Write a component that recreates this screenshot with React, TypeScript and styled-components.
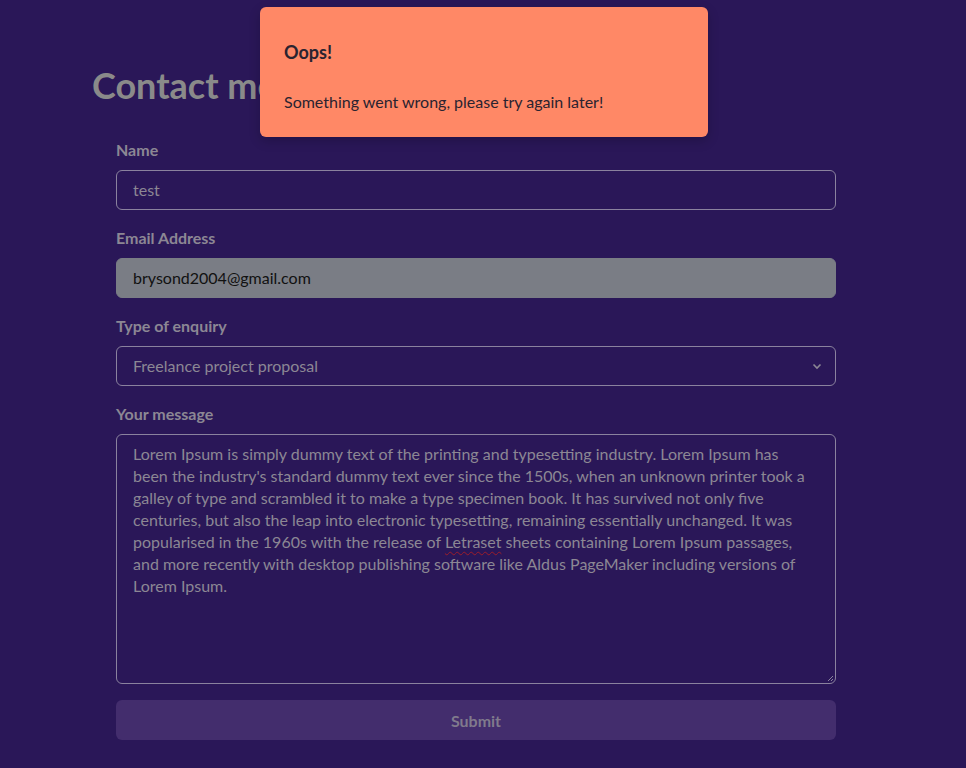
import React from "react";
import styled, { createGlobalStyle } from "styled-components";

const Global = createGlobalStyle`
  html, body { margin: 0; padding: 0; background: #2a1758; }
  body { font-family: "Segoe UI", "Lato", "Noto Sans", sans-serif; }
  * { box-sizing: border-box; }
`;

const Page = styled.div`
  min-height: 768px;
  background: #2a1758;
  padding: 62px 0 0 92px;
  width: 966px;
`;

const Container = styled.div`
  width: 768px;
`;

const Title = styled.h1`
  margin: 0;
  font-size: 36px;
  line-height: 46px;
  font-weight: 700;
  color: #8a8a8a;
`;

const Form = styled.form`
  display: flex;
  flex-direction: column;
  padding: 32px 24px 0;
`;

const Field = styled.div`
  display: flex;
  flex-direction: column;
  gap: 10px;
  margin-bottom: 18px;
`;

const Label = styled.label`
  font-size: 16px;
  line-height: 20px;
  font-weight: 700;
  color: #8c8794;
`;

const Input = styled.div<{ $filled?: boolean }>`
  height: 40px;
  border-radius: 6px;
  border: 1px solid ${(p) => (p.$filled ? "#7a7d85" : "#8a829e")};
  background: ${(p) => (p.$filled ? "#7a7d85" : "transparent")};
  color: ${(p) => (p.$filled ? "#111111" : "#8c8794")};
  font-size: 16px;
  padding: 0 16px 1px;
  display: flex;
  align-items: center;
  justify-content: space-between;
`;

const Chevron = styled.svg`
  width: 12px;
  height: 12px;
  margin-right: -4px;
`;

const TextArea = styled.div`
  height: 250px;
  border-radius: 6px;
  border: 1px solid #8a829e;
  padding: 8px 16px;
  font-size: 16px;
  line-height: 22px;
  color: #8c8794;
  position: relative;
`;

const Line = styled.span`
  display: block;
  white-space: nowrap;
`;

const Squiggle = styled.span`
  text-decoration: underline wavy #9b1c2a;
  text-decoration-thickness: 1px;
  text-underline-offset: 3px;
`;

const Grip = styled.svg`
  position: absolute;
  right: 1px;
  bottom: 1px;
  width: 8px;
  height: 8px;
`;

const Submit = styled.button`
  margin-top: -2px;
  height: 40px;
  border: none;
  border-radius: 6px;
  background: #432d6d;
  color: #807a8c;
  font-family: inherit;
  font-size: 16px;
  font-weight: 700;
`;

const Toast = styled.div`
  position: absolute;
  left: 260px;
  top: 7px;
  width: 448px;
  height: 130px;
  background: #ff8866;
  border-radius: 6px;
  padding: 33px 24px 0;
  color: #2a2330;
  box-shadow: 0 4px 12px rgba(0, 0, 0, 0.2);
`;

const ToastTitle = styled.div`
  font-size: 18px;
  line-height: 24px;
  font-weight: 700;
`;

const ToastBody = styled.div`
  margin-top: 27px;
  font-size: 16px;
  line-height: 22px;
`;

const lines = [
  "Lorem Ipsum is simply dummy text of the printing and typesetting industry. Lorem Ipsum has",
  "been the industry's standard dummy text ever since the 1500s, when an unknown printer took a",
  "galley of type and scrambled it to make a type specimen book. It has survived not only five",
  "centuries, but also the leap into electronic typesetting, remaining essentially unchanged. It was",
];

export default function App() {
  return (
    <>
      <Global />
      <Page>
        <Container>
          <Title>Contact me</Title>
          <Form>
            <Field>
              <Label>Name</Label>
              <Input>test</Input>
            </Field>
            <Field>
              <Label>Email Address</Label>
              <Input $filled>brysond2004@gmail.com</Input>
            </Field>
            <Field>
              <Label>Type of enquiry</Label>
              <Input>
                Freelance project proposal
                <Chevron viewBox="0 0 12 12">
                  <path d="M2.5 4.5 L6 8 L9.5 4.5" fill="none" stroke="#8c8794" strokeWidth="1.6" />
                </Chevron>
              </Input>
            </Field>
            <Field>
              <Label>Your message</Label>
              <TextArea>
                {lines.map((l) => (
                  <Line key={l}>{l}</Line>
                ))}
                <Line>
                  popularised in the 1960s with the release of <Squiggle>Letraset</Squiggle> sheets containing Lorem Ipsum passages,
                </Line>
                <Line>and more recently with desktop publishing software like Aldus PageMaker including versions of</Line>
                <Line>Lorem Ipsum.</Line>
                <Grip viewBox="0 0 8 8">
                  <path d="M7 2 L2 7 M7 5 L5 7" stroke="#8a829e" strokeWidth="1" />
                </Grip>
              </TextArea>
            </Field>
            <Submit type="button">Submit</Submit>
          </Form>
        </Container>
        <Toast>
          <ToastTitle>Oops!</ToastTitle>
          <ToastBody>Something went wrong, please try again later!</ToastBody>
        </Toast>
      </Page>
    </>
  );
}
